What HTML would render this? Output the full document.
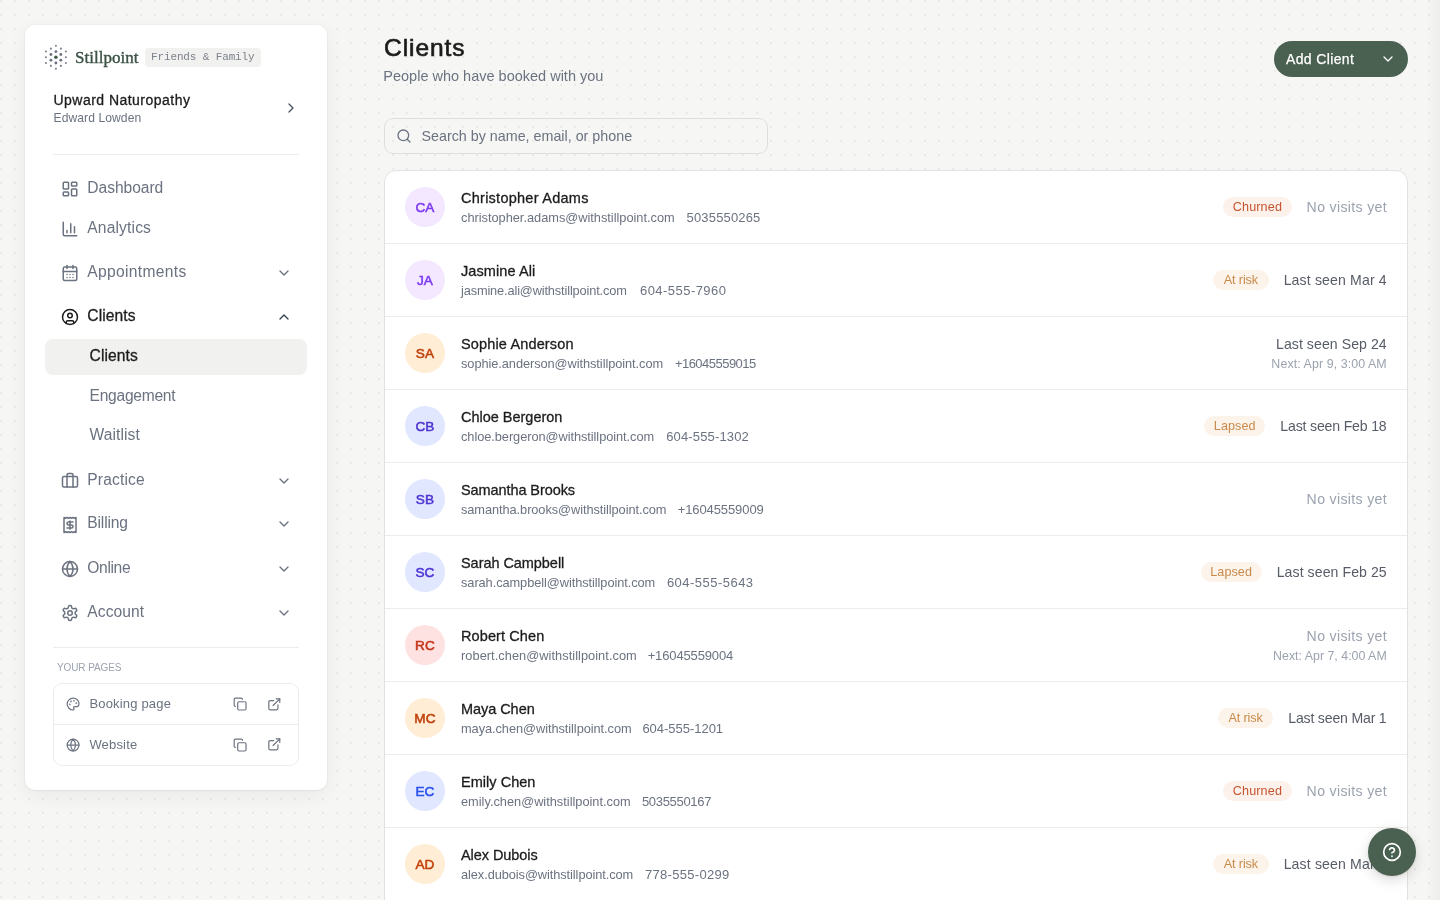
<!DOCTYPE html>
<html><head><meta charset="utf-8">
<style>
*{box-sizing:border-box;margin:0;padding:0}
html,body{width:1440px;height:900px;overflow:hidden}
body{font-family:"Liberation Sans",sans-serif;background-color:#f6f6f4;color:#1c1c1c}
#wrap{position:absolute;left:0;top:0;width:1440px;height:900px;will-change:transform}
#dots{position:absolute;left:0;top:0;width:1440px;height:900px;
background-image:linear-gradient(to right,#e9e9e7 2px,transparent 2px);background-size:14px 14px;
-webkit-mask-image:linear-gradient(to bottom,#000 2px,transparent 2px);-webkit-mask-size:14px 14px}
.abs{position:absolute}
.t{position:absolute;white-space:nowrap;line-height:1}
svg.i{position:absolute;fill:none;stroke:currentColor;stroke-linecap:round;stroke-linejoin:round}
#side{position:absolute;left:25px;top:25px;width:302px;height:765px;background:#fff;border-radius:10px;
box-shadow:0 0 0 1px rgba(0,0,0,0.02),0 1px 3px rgba(0,0,0,0.05),0 6px 20px rgba(0,0,0,0.055)}
#redge{position:absolute;left:1426px;top:0;width:14px;height:900px;background:linear-gradient(to right,rgba(0,0,0,0),rgba(0,0,0,0.035))}
.av{display:flex;align-items:center;justify-content:center;font-size:13.6px;line-height:1;padding-top:1.5px;-webkit-text-stroke:0.55px currentColor;letter-spacing:0.1px}
.rs{display:flex;align-items:center;justify-content:flex-end;gap:16px;white-space:nowrap}
.pill{height:20px;border-radius:10px;font-size:12.6px;line-height:20px;text-align:center;white-space:nowrap}
.one{font-size:14.1px;line-height:20px}
.two{text-align:right}
.l1{font-size:14.1px;line-height:19px}
.l2{font-size:12.4px;line-height:18px;margin-top:1px;color:#9ca3af}
</style></head><body><div id="wrap"><div id="dots"></div>
<div id="side"></div>
<svg class="abs" style="left:0;top:0;width:100px;height:100px" viewBox="0 0 100 100"><circle cx="55.90" cy="57.30" r="1.75" fill="#3f5a49"/><circle cx="55.90" cy="51.60" r="1.45" fill="#6b7280"/><circle cx="50.96" cy="54.45" r="1.45" fill="#6b7280"/><circle cx="50.96" cy="60.15" r="1.45" fill="#6b7280"/><circle cx="55.90" cy="63.00" r="1.45" fill="#6b7280"/><circle cx="60.84" cy="60.15" r="1.45" fill="#6b7280"/><circle cx="60.84" cy="54.45" r="1.45" fill="#6b7280"/><circle cx="55.90" cy="45.80" r="1.05" fill="#7c828c"/><circle cx="50.92" cy="48.67" r="1.05" fill="#7c828c"/><circle cx="45.94" cy="51.55" r="1.05" fill="#7c828c"/><circle cx="45.94" cy="57.30" r="1.05" fill="#7c828c"/><circle cx="45.94" cy="63.05" r="1.05" fill="#7c828c"/><circle cx="50.92" cy="65.92" r="1.05" fill="#7c828c"/><circle cx="55.90" cy="68.80" r="1.05" fill="#7c828c"/><circle cx="60.88" cy="65.92" r="1.05" fill="#7c828c"/><circle cx="65.86" cy="63.05" r="1.05" fill="#7c828c"/><circle cx="65.86" cy="57.30" r="1.05" fill="#7c828c"/><circle cx="65.86" cy="51.55" r="1.05" fill="#7c828c"/><circle cx="60.88" cy="48.67" r="1.05" fill="#7c828c"/></svg>
<div class="t" style="left:75.0px;top:49.01px;font-size:17px;font-family:'Liberation Serif',serif;color:#3d5446;letter-spacing:0.03px;-webkit-text-stroke:0.4px #3d5446">Stillpoint</div>
<div class="abs" style="left:145px;top:48px;width:116px;height:19px;background:#f1f1ef;border-radius:4px"></div>
<div class="t" style="left:151px;top:52.49px;font-size:11px;font-family:'Liberation Mono',monospace;color:#7d828b;letter-spacing:-0.13px">Friends &amp; Family</div>
<div class="t" style="left:53.5px;top:93.35px;font-size:14px;color:#1c1c1c;-webkit-text-stroke:0.3px currentColor;letter-spacing:0.47px">Upward Naturopathy</div>
<div class="t" style="left:53.5px;top:111.86px;font-size:12.1px;color:#6b7280;letter-spacing:0.08px">Edward Lowden</div>
<svg class="i" style="left:283.00px;top:99.85px;width:16px;height:16px;color:#4b5563;" viewBox="0 0 24 24" stroke-width="2"><path d="m9 18 6-6-6-6"/></svg>
<div class="abs" style="left:53px;top:154px;width:246px;height:1px;background:#ececea"></div>
<div class="t" style="left:87.3px;top:179.79px;font-size:15.6px;color:#6b7280;letter-spacing:-0.04px;">Dashboard</div>
<svg class="i" style="left:61.00px;top:179.93px;width:18px;height:18px;color:#6b7280;" viewBox="0 0 24 24" stroke-width="2"><rect width="7" height="9" x="3" y="3" rx="1"/><rect width="7" height="5" x="14" y="3" rx="1"/><rect width="7" height="9" x="14" y="12" rx="1"/><rect width="7" height="5" x="3" y="16" rx="1"/></svg>
<div class="t" style="left:87.3px;top:220.19px;font-size:15.6px;color:#6b7280;letter-spacing:0.15px;">Analytics</div>
<svg class="i" style="left:61.00px;top:220.33px;width:18px;height:18px;color:#6b7280;" viewBox="0 0 24 24" stroke-width="2"><path d="M3 3v16a2 2 0 0 0 2 2h16"/><path d="M18 17V9"/><path d="M13 17V5"/><path d="M8 17v-3"/></svg>
<div class="t" style="left:87.3px;top:263.79px;font-size:15.6px;color:#6b7280;letter-spacing:0.33px;">Appointments</div>
<svg class="i" style="left:61.00px;top:263.93px;width:18px;height:18px;color:#6b7280;" viewBox="0 0 24 24" stroke-width="2"><rect width="18" height="18" x="3" y="4" rx="2"/><path d="M16 2v4"/><path d="M8 2v4"/><path d="M3 10h18"/><path d="M8 14h.01"/><path d="M12 14h.01"/><path d="M16 14h.01"/><path d="M8 18h.01"/><path d="M12 18h.01"/><path d="M16 18h.01"/></svg>
<svg class="i" style="left:275.50px;top:264.63px;width:16px;height:16px;color:#6b7280;" viewBox="0 0 24 24" stroke-width="2"><path d="m6 9 6 6 6-6"/></svg>
<div class="t" style="left:87.3px;top:307.69px;font-size:15.6px;color:#1c1c1c;letter-spacing:0.08px;-webkit-text-stroke:0.3px currentColor;">Clients</div>
<svg class="i" style="left:61.00px;top:307.83px;width:18px;height:18px;color:#1c1c1c;" viewBox="0 0 24 24" stroke-width="2"><circle cx="12" cy="12" r="10"/><circle cx="12" cy="10" r="3"/><path d="M7 20.662V19a2 2 0 0 1 2-2h6a2 2 0 0 1 2 2v1.662"/></svg>
<svg class="i" style="left:275.50px;top:308.53px;width:16px;height:16px;color:#374151;" viewBox="0 0 24 24" stroke-width="2"><path d="m18 15-6-6-6 6"/></svg>
<div class="t" style="left:87.3px;top:471.79px;font-size:15.6px;color:#6b7280;letter-spacing:0.16px;">Practice</div>
<svg class="i" style="left:61.00px;top:471.93px;width:18px;height:18px;color:#6b7280;" viewBox="0 0 24 24" stroke-width="2"><path d="M16 20V4a2 2 0 0 0-2-2h-4a2 2 0 0 0-2 2v16"/><rect width="20" height="14" x="2" y="6" rx="2"/></svg>
<svg class="i" style="left:275.50px;top:472.63px;width:16px;height:16px;color:#6b7280;" viewBox="0 0 24 24" stroke-width="2"><path d="m6 9 6 6 6-6"/></svg>
<div class="t" style="left:87.3px;top:515.49px;font-size:15.6px;color:#6b7280;letter-spacing:-0.15px;">Billing</div>
<svg class="i" style="left:61.00px;top:515.63px;width:18px;height:18px;color:#6b7280;" viewBox="0 0 24 24" stroke-width="2"><path d="M4 2v20l2-1 2 1 2-1 2 1 2-1 2 1 2-1 2 1V2l-2 1-2-1-2 1-2-1-2 1-2-1-2 1Z"/><path d="M16 8h-6a2 2 0 1 0 0 4h4a2 2 0 1 1 0 4H8"/><path d="M12 17.5v-11"/></svg>
<svg class="i" style="left:275.50px;top:516.33px;width:16px;height:16px;color:#6b7280;" viewBox="0 0 24 24" stroke-width="2"><path d="m6 9 6 6 6-6"/></svg>
<div class="t" style="left:87.3px;top:559.69px;font-size:15.6px;color:#6b7280;letter-spacing:-0.36px;">Online</div>
<svg class="i" style="left:61.00px;top:559.83px;width:18px;height:18px;color:#6b7280;" viewBox="0 0 24 24" stroke-width="2"><circle cx="12" cy="12" r="10"/><path d="M12 2a14.5 14.5 0 0 0 0 20 14.5 14.5 0 0 0 0-20"/><path d="M2 12h20"/></svg>
<svg class="i" style="left:275.50px;top:560.53px;width:16px;height:16px;color:#6b7280;" viewBox="0 0 24 24" stroke-width="2"><path d="m6 9 6 6 6-6"/></svg>
<div class="t" style="left:87.3px;top:603.79px;font-size:15.6px;color:#6b7280;letter-spacing:0.07px;">Account</div>
<svg class="i" style="left:61.00px;top:603.93px;width:18px;height:18px;color:#6b7280;" viewBox="0 0 24 24" stroke-width="2"><path d="M12.22 2h-.44a2 2 0 0 0-2 2v.18a2 2 0 0 1-1 1.73l-.43.25a2 2 0 0 1-2 0l-.15-.08a2 2 0 0 0-2.73.73l-.22.38a2 2 0 0 0 .73 2.73l.15.1a2 2 0 0 1 1 1.72v.51a2 2 0 0 1-1 1.74l-.15.09a2 2 0 0 0-.73 2.73l.22.38a2 2 0 0 0 2.73.73l.15-.08a2 2 0 0 1 2 0l.43.25a2 2 0 0 1 1 1.73V20a2 2 0 0 0 2 2h.44a2 2 0 0 0 2-2v-.18a2 2 0 0 1 1-1.73l.43-.25a2 2 0 0 1 2 0l.15.08a2 2 0 0 0 2.73-.73l.22-.39a2 2 0 0 0-.73-2.73l-.15-.08a2 2 0 0 1-1-1.74v-.5a2 2 0 0 1 1-1.74l.15-.09a2 2 0 0 0 .73-2.73l-.22-.38a2 2 0 0 0-2.73-.73l-.15.08a2 2 0 0 1-2 0l-.43-.25a2 2 0 0 1-1-1.73V4a2 2 0 0 0-2-2z"/><circle cx="12" cy="12" r="3"/></svg>
<svg class="i" style="left:275.50px;top:604.63px;width:16px;height:16px;color:#6b7280;" viewBox="0 0 24 24" stroke-width="2"><path d="m6 9 6 6 6-6"/></svg>
<div class="abs" style="left:45px;top:339px;width:262px;height:36px;background:#f1f1ef;border-radius:8px"></div>
<div class="t" style="left:89.6px;top:347.89px;font-size:15.6px;color:#1c1c1c;letter-spacing:0.08px;-webkit-text-stroke:0.3px currentColor;">Clients</div>
<div class="t" style="left:89.6px;top:387.79px;font-size:15.6px;color:#6b7280;letter-spacing:-0.28px;">Engagement</div>
<div class="t" style="left:89.6px;top:427.19px;font-size:15.6px;color:#6b7280;letter-spacing:0.07px;">Waitlist</div>
<div class="abs" style="left:53px;top:647px;width:246px;height:1px;background:#ececea"></div>
<div class="t" style="left:57.0px;top:662.74px;font-size:10px;color:#9ca3af;letter-spacing:-0.1px">YOUR PAGES</div>
<div class="abs" style="left:53px;top:683px;width:246px;height:83px;border:1px solid #ececea;border-radius:9px"></div>
<div class="abs" style="left:54px;top:724px;width:244px;height:1px;background:#ececea"></div>
<svg class="i" style="left:66.10px;top:696.90px;width:14.2px;height:14.2px;color:#6b7280;" viewBox="0 0 24 24" stroke-width="2"><circle cx="13.5" cy="6.5" r=".5" fill="currentColor"/><circle cx="17.5" cy="10.5" r=".5" fill="currentColor"/><circle cx="8.5" cy="7.5" r=".5" fill="currentColor"/><circle cx="6.5" cy="12.5" r=".5" fill="currentColor"/><path d="M12 2C6.5 2 2 6.5 2 12s4.5 10 10 10c.926 0 1.648-.746 1.648-1.688 0-.437-.18-.835-.437-1.125-.29-.289-.438-.652-.438-1.125a1.64 1.64 0 0 1 1.668-1.668h1.996c3.051 0 5.555-2.503 5.555-5.554C21.965 6.012 17.461 2 12 2z"/></svg>
<div class="t" style="left:89.4px;top:696.80px;font-size:13px;color:#6b7280;letter-spacing:0.18px">Booking page</div>
<svg class="i" style="left:233.10px;top:696.90px;width:14.2px;height:14.2px;color:#6b7280;" viewBox="0 0 24 24" stroke-width="2"><rect width="14" height="14" x="8" y="8" rx="2" ry="2"/><path d="M4 16c-1.1 0-2-.9-2-2V4c0-1.1.9-2 2-2h10c1.1 0 2 .9 2 2"/></svg>
<svg class="i" style="left:266.70px;top:696.70px;width:14.6px;height:14.6px;color:#6b7280;" viewBox="0 0 24 24" stroke-width="2"><path d="M15 3h6v6"/><path d="M10 14 21 3"/><path d="M18 13v6a2 2 0 0 1-2 2H5a2 2 0 0 1-2-2V8a2 2 0 0 1 2-2h6"/></svg>
<svg class="i" style="left:66.10px;top:737.60px;width:14.2px;height:14.2px;color:#6b7280;" viewBox="0 0 24 24" stroke-width="2"><circle cx="12" cy="12" r="10"/><path d="M12 2a14.5 14.5 0 0 0 0 20 14.5 14.5 0 0 0 0-20"/><path d="M2 12h20"/></svg>
<div class="t" style="left:89.4px;top:737.50px;font-size:13px;color:#6b7280;letter-spacing:0.18px">Website</div>
<svg class="i" style="left:233.10px;top:737.60px;width:14.2px;height:14.2px;color:#6b7280;" viewBox="0 0 24 24" stroke-width="2"><rect width="14" height="14" x="8" y="8" rx="2" ry="2"/><path d="M4 16c-1.1 0-2-.9-2-2V4c0-1.1.9-2 2-2h10c1.1 0 2 .9 2 2"/></svg>
<svg class="i" style="left:266.70px;top:737.40px;width:14.6px;height:14.6px;color:#6b7280;" viewBox="0 0 24 24" stroke-width="2"><path d="M15 3h6v6"/><path d="M10 14 21 3"/><path d="M18 13v6a2 2 0 0 1-2 2H5a2 2 0 0 1-2-2V8a2 2 0 0 1 2-2h6"/></svg>
<div class="t" style="left:384.0px;top:35.51px;font-size:24.5px;color:#1c1c1c;-webkit-text-stroke:0.65px #1c1c1c;letter-spacing:0.95px">Clients</div>
<div class="t" style="left:383.3px;top:68.63px;font-size:14.5px;color:#6b7280">People who have booked with you</div>
<div class="abs" style="left:1274px;top:41px;width:134px;height:36px;background:#4a6152;border-radius:18px"></div>
<div class="t" style="left:1286px;top:52.35px;font-size:14px;color:#fff;-webkit-text-stroke:0.25px #fff;letter-spacing:0.36px">Add Client</div>
<svg class="i" style="left:1380.00px;top:51.20px;width:16px;height:16px;color:#ffffff;" viewBox="0 0 24 24" stroke-width="2"><path d="m6 9 6 6 6-6"/></svg>
<div class="abs" style="left:384px;top:118px;width:384px;height:36px;border:1px solid #dededa;border-radius:9px"></div>
<svg class="i" style="left:396.00px;top:128.00px;width:16px;height:16px;color:#6b7280;" viewBox="0 0 24 24" stroke-width="2"><circle cx="11" cy="11" r="8"/><path d="m21 21-4.3-4.3"/></svg>
<div class="t" style="left:421.5px;top:129.00px;font-size:14.3px;color:#6b7280">Search by name, email, or phone</div>
<div class="abs" style="left:384px;top:170px;width:1024px;height:800px;background:#fff;border:1px solid #e1e1df;border-radius:12px"></div>
<div class="abs av" style="left:405px;top:187px;width:40px;height:40px;border-radius:50%;background:#f3e8ff;color:#7e3af2"><span>CA</span></div>
<div class="t" style="left:461.0px;top:190.53px;font-size:14.5px;color:#1c1c1c;-webkit-text-stroke:0.3px currentColor;letter-spacing:0.256px">Christopher Adams</div>
<div class="t" style="left:461.0px;top:211.56px;font-size:12.8px;color:#6b7280;letter-spacing:-0.017px">christopher.adams@withstillpoint.com</div>
<div class="t" style="left:686.6px;top:210.60px;font-size:13px;color:#6b7280;letter-spacing:0.156px">5035550265</div>
<div class="t" style="right:53.299999999999955px;top:199.76px;font-size:14.1px;color:#9ca3af;letter-spacing:0.342px;margin-right:-0.342px">No visits yet</div>
<div class="abs pill" style="left:1223.10px;top:197px;width:68.5px;background:#fdf1ec;color:#c5552f"><span style="letter-spacing:0.133px;margin-right:-0.133px">Churned</span></div>
<div class="abs" style="left:385px;top:243px;width:1022px;height:1px;background:#ececea"></div>
<div class="abs av" style="left:405px;top:260px;width:40px;height:40px;border-radius:50%;background:#f3e8ff;color:#7e3af2"><span>JA</span></div>
<div class="t" style="left:461.0px;top:263.53px;font-size:14.5px;color:#1c1c1c;-webkit-text-stroke:0.3px currentColor;letter-spacing:0.090px">Jasmine Ali</div>
<div class="t" style="left:461.0px;top:284.56px;font-size:12.8px;color:#6b7280;letter-spacing:-0.148px">jasmine.ali@withstillpoint.com</div>
<div class="t" style="left:640.0px;top:283.60px;font-size:13px;color:#6b7280;letter-spacing:0.455px">604-555-7960</div>
<div class="t" style="right:53.299999999999955px;top:272.76px;font-size:14.1px;color:#575c66;letter-spacing:0.143px;margin-right:-0.143px">Last seen Mar 4</div>
<div class="abs pill" style="left:1213.20px;top:270px;width:55.5px;background:#fcf3ea;color:#c98a4a"><span style="letter-spacing:-0.117px;margin-right:0.117px">At risk</span></div>
<div class="abs" style="left:385px;top:316px;width:1022px;height:1px;background:#ececea"></div>
<div class="abs av" style="left:405px;top:333px;width:40px;height:40px;border-radius:50%;background:#ffedd5;color:#c2410c"><span>SA</span></div>
<div class="t" style="left:461.0px;top:336.53px;font-size:14.5px;color:#1c1c1c;-webkit-text-stroke:0.3px currentColor;letter-spacing:0.146px">Sophie Anderson</div>
<div class="t" style="left:461.0px;top:357.56px;font-size:12.8px;color:#6b7280;letter-spacing:-0.067px">sophie.anderson@withstillpoint.com</div>
<div class="t" style="left:674.9px;top:356.60px;font-size:13px;color:#6b7280;letter-spacing:-0.523px">+16045559015</div>
<div class="t" style="right:53.299999999999955px;top:337.06px;font-size:14.1px;color:#575c66;letter-spacing:0.067px;margin-right:-0.067px">Last seen Sep 24</div>
<div class="t" style="right:53.299999999999955px;top:357.80px;font-size:12.4px;color:#9ca3af;letter-spacing:0.089px;margin-right:-0.089px">Next: Apr 9, 3:00 AM</div>
<div class="abs" style="left:385px;top:389px;width:1022px;height:1px;background:#ececea"></div>
<div class="abs av" style="left:405px;top:406px;width:40px;height:40px;border-radius:50%;background:#e0e7ff;color:#4f35d2"><span>CB</span></div>
<div class="t" style="left:461.0px;top:409.53px;font-size:14.5px;color:#1c1c1c;-webkit-text-stroke:0.3px currentColor;letter-spacing:-0.015px">Chloe Bergeron</div>
<div class="t" style="left:461.0px;top:430.56px;font-size:12.8px;color:#6b7280;letter-spacing:-0.061px">chloe.bergeron@withstillpoint.com</div>
<div class="t" style="left:666.15px;top:429.60px;font-size:13px;color:#6b7280;letter-spacing:0.159px">604-555-1302</div>
<div class="t" style="right:53.299999999999955px;top:418.76px;font-size:14.1px;color:#575c66;letter-spacing:-0.167px;margin-right:0.167px">Last seen Feb 18</div>
<div class="abs pill" style="left:1204.20px;top:416px;width:61px;background:#fcf3ea;color:#c98a4a"><span style="letter-spacing:0.060px;margin-right:-0.060px">Lapsed</span></div>
<div class="abs" style="left:385px;top:462px;width:1022px;height:1px;background:#ececea"></div>
<div class="abs av" style="left:405px;top:479px;width:40px;height:40px;border-radius:50%;background:#e0e7ff;color:#4f35d2"><span>SB</span></div>
<div class="t" style="left:461.0px;top:482.53px;font-size:14.5px;color:#1c1c1c;-webkit-text-stroke:0.3px currentColor;letter-spacing:-0.086px">Samantha Brooks</div>
<div class="t" style="left:461.0px;top:503.56px;font-size:12.8px;color:#6b7280;letter-spacing:-0.074px">samantha.brooks@withstillpoint.com</div>
<div class="t" style="left:677.65px;top:502.60px;font-size:13px;color:#6b7280;letter-spacing:-0.091px">+16045559009</div>
<div class="t" style="right:53.299999999999955px;top:491.76px;font-size:14.1px;color:#9ca3af;letter-spacing:0.342px;margin-right:-0.342px">No visits yet</div>
<div class="abs" style="left:385px;top:535px;width:1022px;height:1px;background:#ececea"></div>
<div class="abs av" style="left:405px;top:552px;width:40px;height:40px;border-radius:50%;background:#e0e7ff;color:#4f35d2"><span>SC</span></div>
<div class="t" style="left:461.0px;top:555.53px;font-size:14.5px;color:#1c1c1c;-webkit-text-stroke:0.3px currentColor;letter-spacing:-0.054px">Sarah Campbell</div>
<div class="t" style="left:461.0px;top:576.56px;font-size:12.8px;color:#6b7280;letter-spacing:-0.069px">sarah.campbell@withstillpoint.com</div>
<div class="t" style="left:666.9px;top:575.60px;font-size:13px;color:#6b7280;letter-spacing:0.477px">604-555-5643</div>
<div class="t" style="right:53.299999999999955px;top:564.76px;font-size:14.1px;color:#575c66;letter-spacing:0.073px;margin-right:-0.073px">Last seen Feb 25</div>
<div class="abs pill" style="left:1200.60px;top:562px;width:61px;background:#fcf3ea;color:#c98a4a"><span style="letter-spacing:0.060px;margin-right:-0.060px">Lapsed</span></div>
<div class="abs" style="left:385px;top:608px;width:1022px;height:1px;background:#ececea"></div>
<div class="abs av" style="left:405px;top:625px;width:40px;height:40px;border-radius:50%;background:#fee2e2;color:#c5361c"><span>RC</span></div>
<div class="t" style="left:461.0px;top:628.53px;font-size:14.5px;color:#1c1c1c;-webkit-text-stroke:0.3px currentColor;letter-spacing:0.105px">Robert Chen</div>
<div class="t" style="left:461.0px;top:649.56px;font-size:12.8px;color:#6b7280;letter-spacing:0.045px">robert.chen@withstillpoint.com</div>
<div class="t" style="left:647.65px;top:648.60px;font-size:13px;color:#6b7280;letter-spacing:-0.136px">+16045559004</div>
<div class="t" style="right:53.299999999999955px;top:629.06px;font-size:14.1px;color:#9ca3af;letter-spacing:0.342px;margin-right:-0.342px">No visits yet</div>
<div class="t" style="right:53.299999999999955px;top:649.80px;font-size:12.4px;color:#9ca3af;letter-spacing:0.000px;margin-right:-0.000px">Next: Apr 7, 4:00 AM</div>
<div class="abs" style="left:385px;top:681px;width:1022px;height:1px;background:#ececea"></div>
<div class="abs av" style="left:405px;top:698px;width:40px;height:40px;border-radius:50%;background:#ffedd5;color:#c2410c"><span>MC</span></div>
<div class="t" style="left:461.0px;top:701.53px;font-size:14.5px;color:#1c1c1c;-webkit-text-stroke:0.3px currentColor;letter-spacing:-0.056px">Maya Chen</div>
<div class="t" style="left:461.0px;top:722.56px;font-size:12.8px;color:#6b7280;letter-spacing:-0.063px">maya.chen@withstillpoint.com</div>
<div class="t" style="left:642.4px;top:721.60px;font-size:13px;color:#6b7280;letter-spacing:-0.023px">604-555-1201</div>
<div class="t" style="right:53.299999999999955px;top:710.76px;font-size:14.1px;color:#575c66;letter-spacing:-0.186px;margin-right:0.186px">Last seen Mar 1</div>
<div class="abs pill" style="left:1217.80px;top:708px;width:55.5px;background:#fcf3ea;color:#c98a4a"><span style="letter-spacing:-0.117px;margin-right:0.117px">At risk</span></div>
<div class="abs" style="left:385px;top:754px;width:1022px;height:1px;background:#ececea"></div>
<div class="abs av" style="left:405px;top:771px;width:40px;height:40px;border-radius:50%;background:#e0e7ff;color:#2a50ec"><span>EC</span></div>
<div class="t" style="left:461.0px;top:774.53px;font-size:14.5px;color:#1c1c1c;-webkit-text-stroke:0.3px currentColor;letter-spacing:0.033px">Emily Chen</div>
<div class="t" style="left:461.0px;top:795.56px;font-size:12.8px;color:#6b7280;letter-spacing:-0.007px">emily.chen@withstillpoint.com</div>
<div class="t" style="left:641.9px;top:794.60px;font-size:13px;color:#6b7280;letter-spacing:-0.306px">5035550167</div>
<div class="t" style="right:53.299999999999955px;top:783.76px;font-size:14.1px;color:#9ca3af;letter-spacing:0.342px;margin-right:-0.342px">No visits yet</div>
<div class="abs pill" style="left:1223.10px;top:781px;width:68.5px;background:#fdf1ec;color:#c5552f"><span style="letter-spacing:0.133px;margin-right:-0.133px">Churned</span></div>
<div class="abs" style="left:385px;top:827px;width:1022px;height:1px;background:#ececea"></div>
<div class="abs av" style="left:405px;top:844px;width:40px;height:40px;border-radius:50%;background:#ffedd5;color:#c2410c"><span>AD</span></div>
<div class="t" style="left:461.0px;top:847.53px;font-size:14.5px;color:#1c1c1c;-webkit-text-stroke:0.3px currentColor;letter-spacing:-0.070px">Alex Dubois</div>
<div class="t" style="left:461.0px;top:868.56px;font-size:12.8px;color:#6b7280;letter-spacing:-0.076px">alex.dubois@withstillpoint.com</div>
<div class="t" style="left:644.9px;top:867.60px;font-size:13px;color:#6b7280;letter-spacing:0.318px">778-555-0299</div>
<div class="t" style="right:53.299999999999955px;top:856.76px;font-size:14.1px;color:#575c66;letter-spacing:0.143px;margin-right:-0.143px">Last seen Mar 4</div>
<div class="abs pill" style="left:1213.20px;top:854px;width:55.5px;background:#fcf3ea;color:#c98a4a"><span style="letter-spacing:-0.117px;margin-right:0.117px">At risk</span></div>
<div class="abs" style="left:1368px;top:828px;width:48px;height:48px;border-radius:50%;background:#4a6152;box-shadow:0 4px 14px rgba(0,0,0,0.14),0 1px 3px rgba(0,0,0,0.08)"></div>
<svg class="i" style="left:1382.00px;top:842.00px;width:20px;height:20px;color:#ffffff;" viewBox="0 0 24 24" stroke-width="2"><circle cx="12" cy="12" r="10"/><path d="M9.09 9a3 3 0 0 1 5.83 1c0 2-3 3-3 3"/><path d="M12 17h.01"/></svg>
<div id="redge"></div></div>
</body></html>
